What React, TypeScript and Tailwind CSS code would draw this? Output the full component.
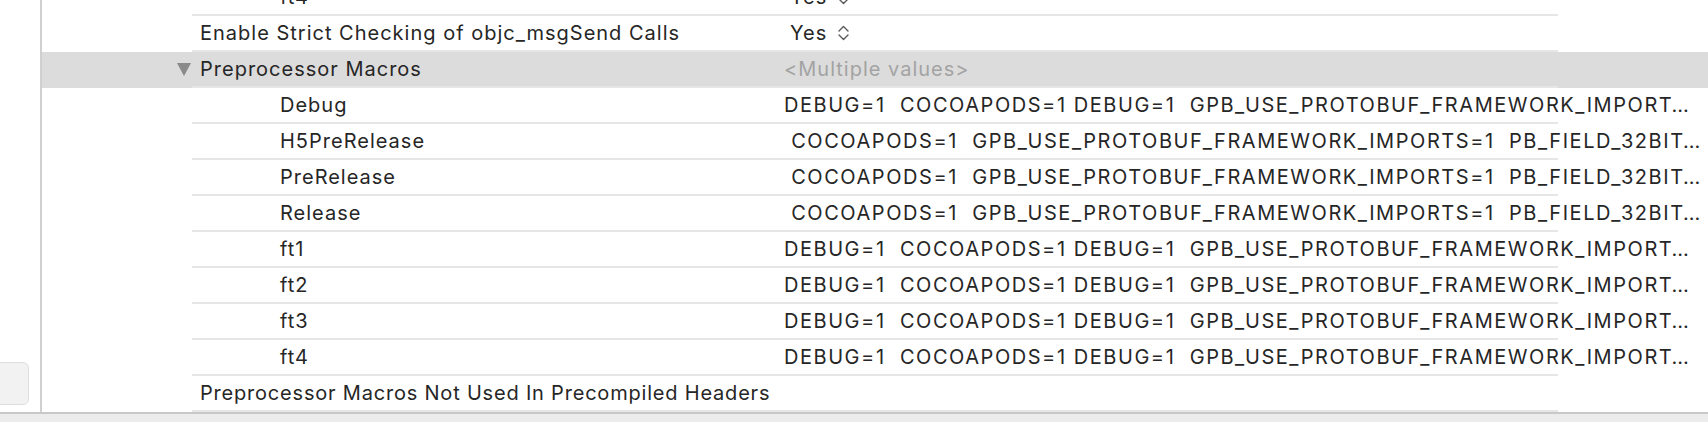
import type { ReactNode } from 'react';

const macroRows = [
  { name: 'Debug', value: 'DEBUG=1  COCOAPODS=1 DEBUG=1  GPB_USE_PROTOBUF_FRAMEWORK_IMPORT…' },
  { name: 'H5PreRelease', value: ' COCOAPODS=1  GPB_USE_PROTOBUF_FRAMEWORK_IMPORTS=1  PB_FIELD_32BIT…' },
  { name: 'PreRelease', value: ' COCOAPODS=1  GPB_USE_PROTOBUF_FRAMEWORK_IMPORTS=1  PB_FIELD_32BIT…' },
  { name: 'Release', value: ' COCOAPODS=1  GPB_USE_PROTOBUF_FRAMEWORK_IMPORTS=1  PB_FIELD_32BIT…' },
  { name: 'ft1', value: 'DEBUG=1  COCOAPODS=1 DEBUG=1  GPB_USE_PROTOBUF_FRAMEWORK_IMPORT…' },
  { name: 'ft2', value: 'DEBUG=1  COCOAPODS=1 DEBUG=1  GPB_USE_PROTOBUF_FRAMEWORK_IMPORT…' },
  { name: 'ft3', value: 'DEBUG=1  COCOAPODS=1 DEBUG=1  GPB_USE_PROTOBUF_FRAMEWORK_IMPORT…' },
  { name: 'ft4', value: 'DEBUG=1  COCOAPODS=1 DEBUG=1  GPB_USE_PROTOBUF_FRAMEWORK_IMPORT…' }
];

function Chevrons() {
  return (
    <svg
      width="13"
      height="16"
      viewBox="0 0 13 16"
      fill="none"
      stroke="#5a5a5a"
      strokeWidth="1.4"
      strokeLinecap="round"
      strokeLinejoin="round"
    >
      <polyline points="2,6 6.5,1.5 11,6" />
      <polyline points="2,10 6.5,14.5 11,10" />
    </svg>
  );
}

function Row({ children, highlight }: { children: ReactNode; highlight?: boolean }) {
  return (
    <div className={highlight ? 'h-[36px] shrink-0 flex flex-col bg-[#dcdcdc]' : 'h-[36px] shrink-0 flex flex-col'}>
      <div className="h-[34px] flex items-center">{children}</div>
      <div className="ml-[150px] w-[1366px] h-[2px] bg-[#e6e6e6]" />
    </div>
  );
}

function YesValue() {
  return (
    <div className="flex items-center gap-[10px] ml-[6px]">
      <span>Yes</span>
      <Chevrons />
    </div>
  );
}

export default function App() {
  return (
    <div
      className="w-[1708px] h-[422px] bg-white overflow-hidden flex flex-col text-[20px] tracking-[1px] text-[#262626]"
      style={{ fontFamily: 'Inter, "Noto Sans", sans-serif' }}
    >
      <div className="h-[412px] flex">
        {/* sidebar */}
        <div className="w-[40px] flex flex-col justify-end pb-[7px] overflow-hidden">
          <div className="-ml-[11px] w-[40px] h-[43px] rounded-[6px] bg-[#f2f2f2] border border-[#dedede]" />
        </div>
        <div className="w-[2px] bg-[#d0d0d0]" />

        {/* settings list */}
        <div className="flex-1 flex flex-col overflow-hidden">
          {/* partially scrolled-off row */}
          <div className="h-[16px] shrink-0 flex flex-col overflow-hidden">
            <div className="h-[14px] overflow-hidden">
              <div className="h-[34px] -mt-[20px] flex items-center">
                <div className="w-[742px] pl-[238px]">ft4</div>
                <YesValue />
              </div>
            </div>
            <div className="ml-[150px] w-[1366px] h-[2px] bg-[#e6e6e6]" />
          </div>

          <Row>
            <div className="w-[742px] pl-[158px]">Enable Strict Checking of objc_msgSend Calls</div>
            <YesValue />
          </Row>

          <Row highlight>
            <div className="w-[742px] pl-[135px] flex items-center gap-[9px]">
              <svg width="14" height="13" viewBox="0 0 14 13">
                <polygon points="0,0 14,0 7,13" fill="#8a8a8a" />
              </svg>
              <span>Preprocessor Macros</span>
            </div>
            <span className="text-[#a3a3a3]">&lt;Multiple values&gt;</span>
          </Row>

          {macroRows.map((row) => (
            <Row key={row.name}>
              <div className="w-[742px] pl-[238px]">{row.name}</div>
              <span className="whitespace-pre tracking-[1.55px]">{row.value}</span>
            </Row>
          ))}

          <Row>
            <div className="pl-[158px] tracking-[0.8px]">Preprocessor Macros Not Used In Precompiled Headers</div>
          </Row>
        </div>
      </div>

      <div className="flex-1 border-t-2 border-[#c8c8c8] bg-[#ececec]" />
    </div>
  );
}
